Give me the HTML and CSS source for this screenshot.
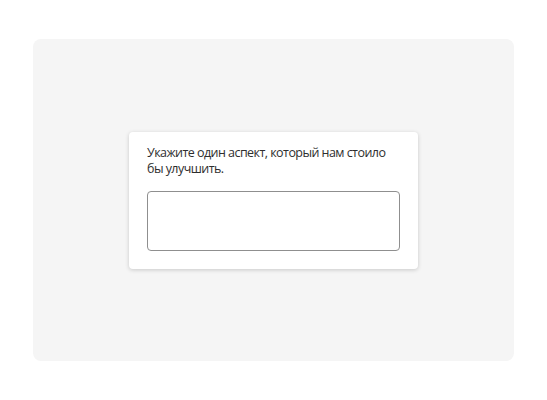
FILE: index.html
```html
<!DOCTYPE html>
<html lang="ru">
<head>
<meta charset="utf-8">
<link rel="stylesheet" href="styles.css">
</head>
<body>
  <main class="stage">
    <section class="card">
      <label class="question" for="answer">Укажите один аспект, который нам стоило бы улучшить.</label>
      <textarea id="answer" class="answer"></textarea>
    </section>
  </main>
</body>
</html>
```
FILE: styles.css
```css
html, body {
  margin: 0;
  background: #ffffff;
}

body {
  padding: 39px 33px;
  font-family: "Open Sans", "Noto Sans", sans-serif;
}

.stage {
  width: 481px;
  height: 322px;
  background: #f5f5f5;
  border-radius: 8px;
  display: flex;
  align-items: center;
  justify-content: center;
}

.card {
  width: 289px;
  box-sizing: border-box;
  padding: 13px 18px 18px 18px;
  background: #ffffff;
  border-radius: 4px;
  box-shadow: 0 1px 4px rgba(0, 0, 0, 0.18);
  display: flex;
  flex-direction: column;
  gap: 14px;
}

.question {
  font-size: 12.5px;
  letter-spacing: -0.55px;
  line-height: 16px;
  color: #2e2e2e;
}

.answer {
  display: block;
  height: 60px;
  box-sizing: border-box;
  margin: 0;
  border: 1px solid #8f8f8f;
  border-radius: 4px;
  resize: none;
  background: #ffffff;
}
```
